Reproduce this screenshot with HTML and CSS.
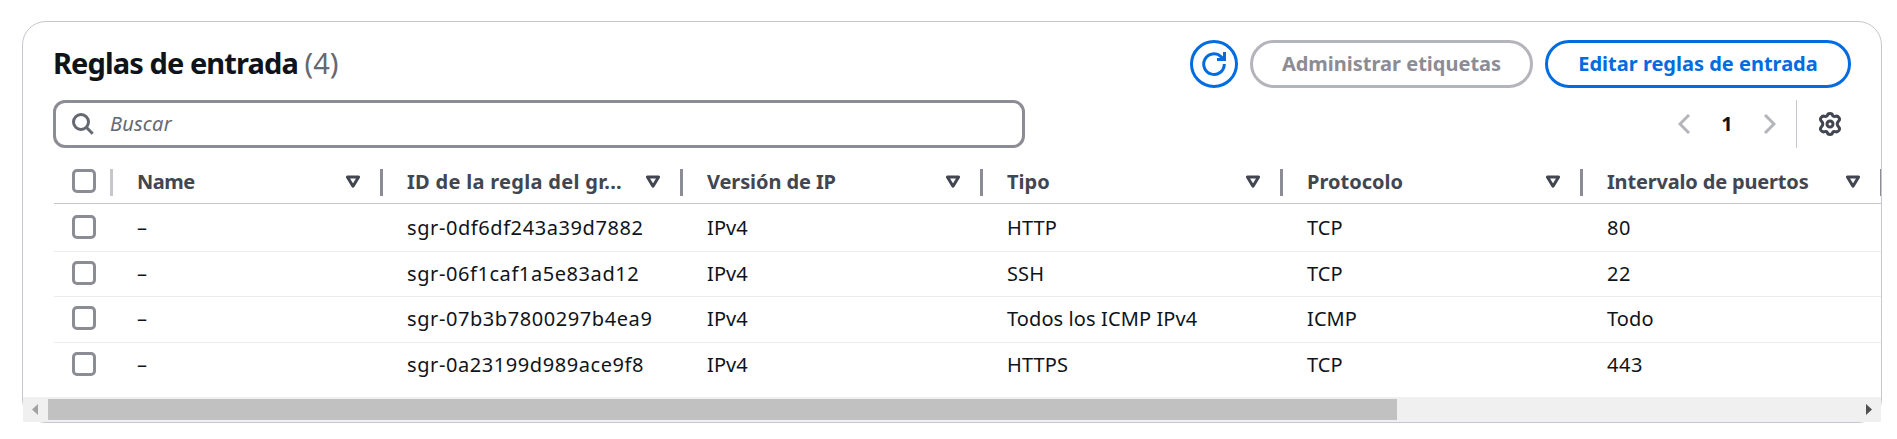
FILE: index.html
```html
<!DOCTYPE html>
<html lang="es">
<head>
<meta charset="utf-8">
<title>Reglas de entrada</title>
<link rel="stylesheet" href="styles.css">
</head>
<body>
<svg width="0" height="0" class="defs">
  <symbol id="tri" viewBox="0 0 16 14"><path d="M2.4 2h11.2L8 11.2z" fill="none" stroke="currentColor" stroke-width="3" stroke-linejoin="round"/></symbol>
</svg>
<section class="card">
  <header class="head">
    <h2 class="title">Reglas de entrada <span class="count">(4)</span></h2>
    <div class="actions">
      <button class="btn round" aria-label="Actualizar"><svg width="24" height="24" viewBox="0 0 24 24" fill="none" stroke="currentColor" stroke-width="3"><path d="M22.3 12A10.3 10.3 0 1 1 19 4.6L21.8 7.500"/><path d="M22.5 0v7.500H15"/></svg></button>
      <button class="btn disabled">Administrar etiquetas</button>
      <button class="btn edit">Editar reglas de entrada</button>
    </div>
  </header>
  <div class="tools">
    <div class="search">
      <svg width="22" height="22" viewBox="0 0 22 22" fill="none" stroke="currentColor" stroke-width="3"><circle cx="9" cy="9" r="7.5"/><path d="M14.3 14.3l6.4 6.4"/></svg>
      <span class="placeholder">Buscar</span>
    </div>
    <div class="pager">
      <svg class="chev" width="12" height="20" viewBox="0 0 12 20" fill="none" stroke="currentColor" stroke-width="3"><path d="M11 1L2 10l9 9"/></svg>
      <b class="page">1</b>
      <svg class="chev" width="12" height="20" viewBox="0 0 12 20" fill="none" stroke="currentColor" stroke-width="3"><path d="M1 1l9 9-9 9"/></svg>
      <span class="rule"></span>
      <svg class="gear" width="24" height="24" viewBox="0 0 24 24" fill="none" stroke="currentColor" stroke-width="3" stroke-linejoin="round"><path d="M9.300 3.700Q9.600 1.500 12 1.500T14.700 3.700Q15.600 4.900 17.100 4.400Q19.500 3.500 20.900 5.500Q22.300 7.600 20.600 9.200Q19.200 10.500 19.200 12T20.600 14.800Q22.300 16.400 20.900 18.500Q19.500 20.500 17.100 19.600Q15.600 19.100 14.700 20.300Q14.400 22.500 12 22.500T9.300 20.300Q8.400 19.100 6.900 19.600Q4.500 20.500 3.100 18.500Q1.700 16.400 3.400 14.800Q4.800 13.500 4.800 12T3.400 9.200Q1.700 7.600 3.100 5.500Q4.500 3.500 6.900 4.400Q8.400 4.900 9.300 3.700Z"/><circle cx="12" cy="12" r="3"/></svg>
    </div>
  </div>
  <div class="table">
    <div class="row hrow">
      <div class="sel"><i class="box"></i></div>
      <div class="th first"><span class="t-name">Name</span><svg class="tri"><use href="#tri"/></svg></div>
      <div class="th"><span class="t-id">ID de la regla del gr...</span><svg class="tri"><use href="#tri"/></svg></div>
      <div class="th"><span class="t-ver">Versión de IP</span><svg class="tri"><use href="#tri"/></svg></div>
      <div class="th"><span>Tipo</span><svg class="tri"><use href="#tri"/></svg></div>
      <div class="th"><span>Protocolo</span><svg class="tri"><use href="#tri"/></svg></div>
      <div class="th"><span class="t-port">Intervalo de puertos</span><svg class="tri"><use href="#tri"/></svg></div>
      <div class="th"></div>
    </div>
    <div class="row r1"><div class="sel"><i class="box"></i></div><div class="td first">–</div><div class="td id">sgr-0df6df243a39d7882</div><div class="td">IPv4</div><div class="td">HTTP</div><div class="td">TCP</div><div class="td num">80</div></div>
    <div class="row r2"><div class="sel"><i class="box"></i></div><div class="td first">–</div><div class="td id">sgr-06f1caf1a5e83ad12</div><div class="td">IPv4</div><div class="td">SSH</div><div class="td">TCP</div><div class="td num">22</div></div>
    <div class="row r3"><div class="sel"><i class="box"></i></div><div class="td first">–</div><div class="td id">sgr-07b3b7800297b4ea9</div><div class="td">IPv4</div><div class="td">Todos los ICMP IPv4</div><div class="td">ICMP</div><div class="td">Todo</div></div>
    <div class="row r4"><div class="sel"><i class="box"></i></div><div class="td first">–</div><div class="td id">sgr-0a23199d989ace9f8</div><div class="td">IPv4</div><div class="td">HTTPS</div><div class="td">TCP</div><div class="td num">443</div></div>
  </div>
  <div class="scroll">
    <svg width="25" height="25"><path d="M15 7v11l-6-5.500z" fill="#a3a3a3"/></svg>
    <div class="thumb"></div>
    <svg class="end" width="25" height="25"><path d="M10 7v11l6-5.500z" fill="#505050"/></svg>
  </div>
</section>
</body>
</html>
```
FILE: styles.css
```css
* { box-sizing: border-box; }
body { margin: 0; padding: 21px 15px 0 22px; background: #fff; color: #0f141a; font: 20px/30px "Noto Sans", "Open Sans", sans-serif; overflow: hidden; }
.defs { position: absolute; }
.card { width: 1860px; height: 402px; border: 1px solid #c6c6cd; border-radius: 24px; display: flex; flex-direction: column; }
.head { display: flex; justify-content: space-between; padding: 18px 30px 0 30px; height: 66px; }
.title { margin: 0; font-size: 29px; line-height: 46px; font-weight: 700; letter-spacing: -0.9px; white-space: nowrap; }
.count { font-weight: 400; color: #656871; letter-spacing: 0; }
.actions { display: flex; gap: 12px; }
.btn { height: 48px; border: 3px solid #006ce0; border-radius: 24px; background: #fff; color: #006ce0; font: 700 20px/30px "Noto Sans", sans-serif; padding: 0; white-space: nowrap; display: flex; align-items: center; justify-content: center; width: 283px; }
.round { width: 48px; }
.edit { width: 306px; }
.disabled { color: #8c8c94; border-color: #b4b4bb; }
.tools { display: flex; justify-content: space-between; padding: 12px 39px 0 30px; height: 60px; }
.search { width: 972px; height: 48px; border: 3px solid #8c8c94; border-radius: 12px; display: flex; align-items: center; padding-left: 16px; gap: 16px; color: #656871; }
.placeholder { font-style: italic; letter-spacing: 0.2px; }
.pager { display: flex; align-items: center; color: #424650; }
.chev { color: #b4b4bb; }
.page { color: #0f141a; width: 12px; margin: 0 31px; text-align: center; }
.rule { width: 1px; height: 48px; background: #c6c6cd; margin: 0 21px 0 20px; }
.table { height: 249px; overflow: hidden; padding-left: 31px; }
.row { display: grid; grid-template-columns: 56px 270px repeat(6, 300px); width: 2200px; border-bottom: 1px solid #ebebf0; align-items: start; }
.hrow { height: 56px; padding-top: 18px; border-color: #c6c6cd; color: #424650; font-weight: 700; }
.sel { padding-left: 18px; }
.box { display: block; width: 24px; height: 24px; border: 3px solid #8c8c94; border-radius: 5px; margin-top: 3px; }
.th { display: flex; justify-content: space-between; padding: 0 19px 0 24px; height: 27px; margin-top: 3px; border-left: 3px solid #8c8c94; line-height: 26px; white-space: nowrap; }
.th.first { border-color: #c6c6cd; }
.t-name { letter-spacing: -0.5px; }
.t-id { letter-spacing: 0.3px; }
.t-ver { letter-spacing: -0.1px; }
.t-port { letter-spacing: -0.17px; }
.tri { width: 16px; height: 14px; margin-top: 6px; }
.td { padding: 1px 0 0 27px; white-space: nowrap; letter-spacing: 0.1px; }
.td.id { letter-spacing: 0.58px; }
.td.num { letter-spacing: 0.5px; }
.r1 { height: 48px; padding-top: 8px; }
.r2 { height: 45px; padding-top: 6px; }
.r3 { height: 46px; padding-top: 6px; }
.r4 { height: 48px; padding-top: 6px; border: 0; }
.scroll { height: 25px; flex: none; background: #f0f0f0; display: flex; align-items: center; }
.thumb { width: 1349px; height: 21px; background: #c1c1c1; }
.end { margin-left: auto; }
```
